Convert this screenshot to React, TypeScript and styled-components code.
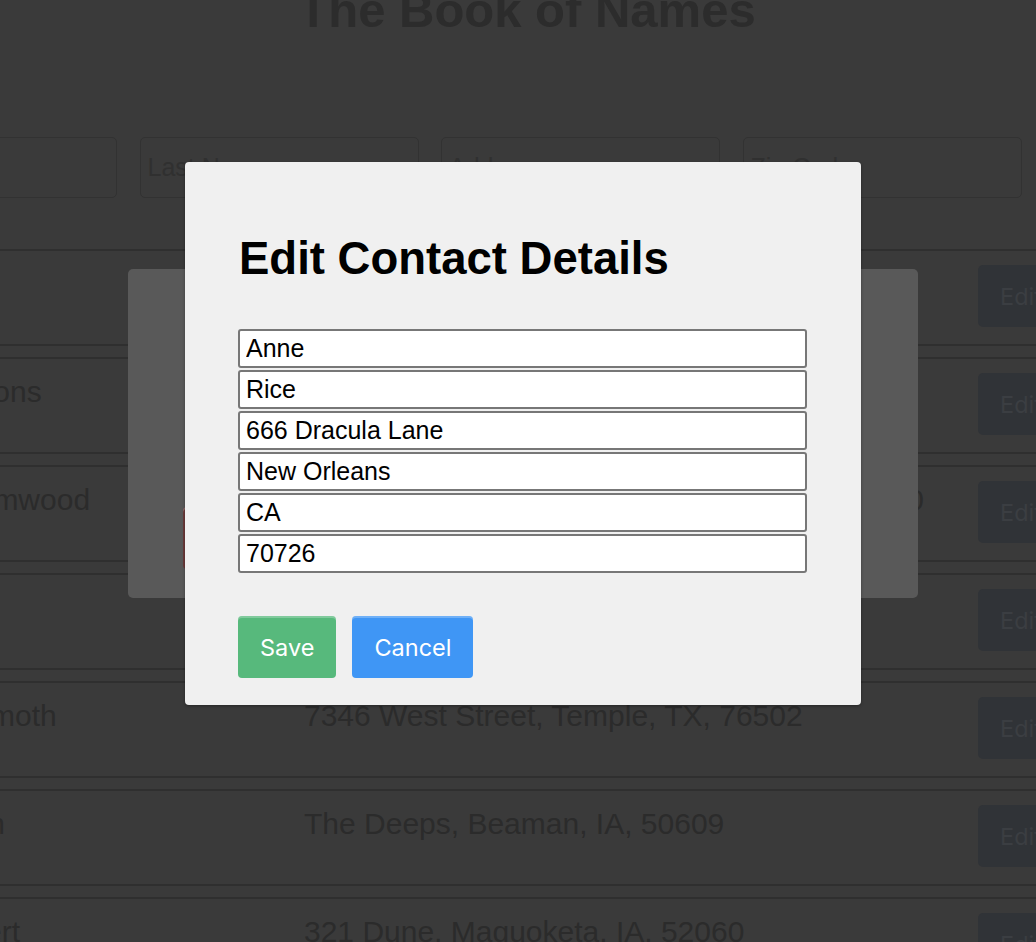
import React from 'react';
import styled, { createGlobalStyle } from 'styled-components';

type Contact = {
  name: string,
  address: string,
};

const contacts: Contact[] = [
  { name: 'Anne Rice', address: '666 Dracula Lane, New Orleans, CA, 70726' },
  { name: 'Ben Simmons', address: '12 Hollow Road, Salem, MA, 01970' },
  { name: 'Richard Elmwood', address: '1313 Mockingbird Street, Peabody, MA, 01960' },
  { name: 'Nosferatu', address: '1 Castle Way, Wisborg, NY, 10001' },
  { name: 'Tom Behemoth', address: '7346 West Street, Temple, TX, 76502' },
  { name: 'Jim Kraken', address: 'The Deeps, Beaman, IA, 50609' },
  { name: 'Sami Desert', address: '321 Dune, Maquoketa, IA, 52060' },
];

const editValues = ['Anne', 'Rice', '666 Dracula Lane', 'New Orleans', 'CA', '70726'];

const GlobalStyle = createGlobalStyle`
  body {
    margin: 0;
    background: #3a3a3a;
    overflow: hidden;
    font-family: "Liberation Sans", Arial, sans-serif;
  }
`;

const Page = styled.div`
  width: 1414px;
  margin: -18px 0 0 -180px;
`;

const Title = styled.h1`
  margin: 0;
  text-align: center;
  font-size: 49px;
  line-height: 56px;
  font-weight: bold;
  color: #2c2c2c;
`;

const SearchRow = styled.div`
  display: flex;
  gap: 22.5px;
  margin-top: 99px;
  padding-left: 18px;
`;

const SearchInput = styled.input`
  box-sizing: border-box;
  width: 279px;
  height: 61px;
  padding: 0 7px;
  border: 1px solid #323232;
  border-radius: 5px;
  background: transparent;
  font-family: "Liberation Sans", Arial, sans-serif;
  font-size: 25px;

  &::placeholder {
    color: #303030;
  }
`;

const ContactList = styled.div`
  margin-top: 51px;
`;

const Row = styled.div`
  display: flex;
  align-items: flex-start;
  padding: 14px 0 17px 35px;
  margin-bottom: 11px;
  border-top: 2px solid #2f2f2f;
  border-bottom: 2px solid #2f2f2f;
`;

const Cell = styled.div<{ $width: number }>`
  width: ${({ $width }) => $width}px;
  flex-shrink: 0;
  padding-top: 2px;
  font-size: 30px;
  line-height: 34px;
  color: #2b2b2b;
  white-space: nowrap;
`;

const EditButton = styled.button`
  height: 62px;
  padding: 0 22px;
  border: none;
  border-radius: 5px;
  background: #303337;
  color: #3b3e42;
  font-family: Inter, "Open Sans", sans-serif;
  font-size: 23.5px;
`;

const BackModal = styled.div`
  position: absolute;
  left: 128px;
  top: 269px;
  box-sizing: border-box;
  width: 790px;
  height: 329px;
  padding: 27px 55px;
  border-radius: 5px;
  background: #595959;
  color: #2c2c2c;
`;

const FrontModal = styled.div`
  position: absolute;
  left: 185px;
  top: 162px;
  box-sizing: border-box;
  width: 676px;
  padding: 27px 54px 27px 53px;
  border-radius: 4px;
  background: #f0f0f0;
  box-shadow: 0 1px 3px rgba(0, 0, 0, 0.35);
`;

const ModalTitle = styled.h2`
  margin: 44px 0 44px 1px;
  font-size: 45.5px;
  line-height: 52px;
  font-weight: bold;
  color: #000;
`;

const BackTitle = styled(ModalTitle)`
  color: #262626;
`;

const Warning = styled.p`
  margin: 0 0 37px;
  font-size: 30px;
  line-height: 34px;
  letter-spacing: 0.12px;
  white-space: nowrap;
`;

const Fields = styled.div`
  display: flex;
  flex-direction: column;
  gap: 2px;
`;

const Field = styled.input`
  box-sizing: border-box;
  width: 569px;
  height: 39px;
  padding: 0 6px;
  border: 2px solid #777;
  border-radius: 3px;
  background: #fff;
  color: #000;
  font-family: "Liberation Sans", Arial, sans-serif;
  font-size: 25px;
`;

const Actions = styled.div`
  display: flex;
  gap: 16px;
  margin-top: 43px;
`;

const ActionButton = styled.button<{ $color: string }>`
  height: 62px;
  padding: 0 22px;
  border: none;
  border-radius: 4px;
  background: ${({ $color }) => $color};
  box-shadow: inset 0 2px 0 rgba(255, 255, 255, 0.25);
  color: #fff;
  font-family: Inter, "Open Sans", sans-serif;
  font-size: 23.5px;
`;

const App = () => {
  return (
    <>
      <GlobalStyle />
      <Page>
        <Title>The Book of Names</Title>
        <SearchRow>
          <SearchInput placeholder='First Name' />
          <SearchInput placeholder='Last Name' />
          <SearchInput placeholder='Address' />
          <SearchInput placeholder='Zip Code' />
        </SearchRow>
        <ContactList>
          {contacts.map((contact) => (
            <Row key={contact.name}>
              <Cell $width={449}>{contact.name}</Cell>
              <Cell $width={674}>{contact.address}</Cell>
              <EditButton>Edit</EditButton>
            </Row>
          ))}
        </ContactList>
      </Page>

      <BackModal>
        <BackTitle>Are you sure?</BackTitle>
        <Warning>Be careful, deleting this contact cannot be undone!</Warning>
        <ActionButton $color='#6b3a3a'>Delete</ActionButton>
      </BackModal>

      <FrontModal>
        <ModalTitle>Edit Contact Details</ModalTitle>
        <Fields>
          {editValues.map((value) => (
            <Field key={value} defaultValue={value} />
          ))}
        </Fields>
        <Actions>
          <ActionButton $color='#57b97c'>Save</ActionButton>
          <ActionButton $color='#3f96f5'>Cancel</ActionButton>
        </Actions>
      </FrontModal>
    </>
  );
};

export default App;
